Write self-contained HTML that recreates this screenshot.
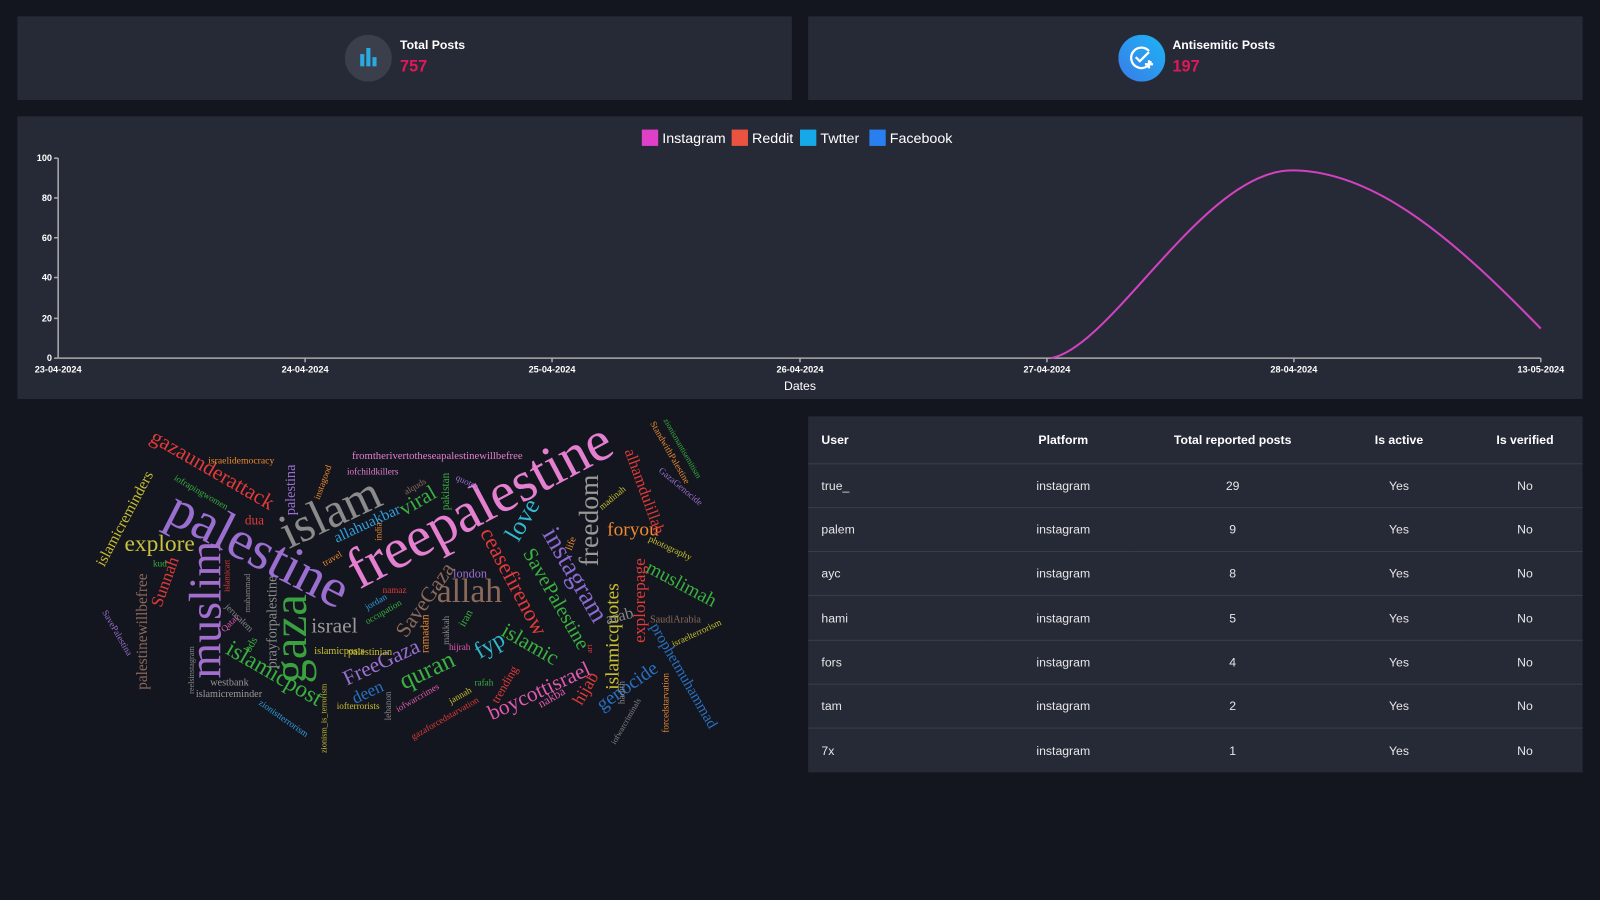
<!DOCTYPE html>
<html><head><meta charset="utf-8"><style>
*{margin:0;padding:0;box-sizing:border-box}
html,body{width:1600px;height:900px;overflow:hidden;background:#13161e;font-family:"Liberation Sans",sans-serif;color:#fff}
#w{position:absolute;left:0;top:0;width:1568px;height:882px;transform:scale(1.020408);transform-origin:0 0}
.card{position:absolute;background:#262a36}
.t{position:absolute;font-weight:bold;font-size:12px}
.n{position:absolute;font-weight:bold;font-size:16px;color:#e0185a}
table{border-collapse:collapse;width:100%;font-size:12px;table-layout:fixed}
th{height:46px;font-weight:bold;border-bottom:1px solid #3a3e4a}
td{height:43.3px;border-bottom:1px solid #3a3e4a;color:#e6e6e6}
th,td{text-align:center}
th:first-child,td:first-child{text-align:left;padding-left:13px}
tr:last-child td{border-bottom:none}
</style></head><body><div id="w">
<div class="card" style="left:17px;top:16px;width:759px;height:82px"></div>
<div class="card" style="left:792px;top:16px;width:759px;height:82px"></div>
<svg style="position:absolute;left:338px;top:34px" width="46" height="46"><circle cx="23" cy="23" r="23" fill="#3b3f4b"/><rect x="15" y="19" width="4" height="12" fill="#29abe2"/><rect x="21" y="13" width="4" height="18" fill="#29abe2"/><rect x="27" y="22" width="4" height="9" fill="#29abe2"/></svg>
<div class="t" style="left:392px;top:37px">Total Posts</div><div class="n" style="left:392px;top:57px">757</div>
<svg style="position:absolute;left:1096px;top:34px" width="46" height="46"><defs><linearGradient id="g" x1="0" y1="1" x2="1" y2="0"><stop offset="0" stop-color="#3a7be8"/><stop offset="1" stop-color="#1cb5f5"/></linearGradient></defs><circle cx="23" cy="23" r="23" fill="url(#g)"/><path d="M30 16 A10 10 0 1 0 32 26" fill="none" stroke="#fff" stroke-width="2.2"/><path d="M17 22 l4 4 l9 -9" fill="none" stroke="#fff" stroke-width="2.2"/><path d="M30 25 v8 M26 29 h8" stroke="#fff" stroke-width="2.2"/></svg>
<div class="t" style="left:1149px;top:37px">Antisemitic Posts</div><div class="n" style="left:1149px;top:57px">197</div>

<div class="card" style="left:17px;top:114px;width:1534px;height:277px"></div>
<svg style="position:absolute;left:0;top:0" width="1568" height="400" font-family="Liberation Sans" font-weight="bold" font-size="9" fill="#fff">
<g font-weight="normal" font-size="14"><rect x="629" y="127" width="16" height="16" fill="#e040c8"/><text x="649" y="140">Instagram</text>
<rect x="717" y="127" width="16" height="16" fill="#e9533f"/><text x="737" y="140">Reddit</text>
<rect x="784" y="127" width="16" height="16" fill="#16a8e8"/><text x="804" y="140">Twtter</text>
<rect x="852" y="127" width="16" height="16" fill="#2a7ff0"/><text x="872" y="140">Facebook</text></g>
<g stroke="#aaa" stroke-width="1.5"><line x1="57" y1="155" x2="57" y2="351"/><line x1="57" y1="351" x2="1510" y2="351"/>
<line x1="53" y1="155" x2="57" y2="155"/><line x1="53" y1="194" x2="57" y2="194"/><line x1="53" y1="233" x2="57" y2="233"/><line x1="53" y1="272" x2="57" y2="272"/><line x1="53" y1="312" x2="57" y2="312"/><line x1="53" y1="351" x2="57" y2="351"/>
<line x1="299" y1="351" x2="299" y2="355"/><line x1="541" y1="351" x2="541" y2="355"/><line x1="784" y1="351" x2="784" y2="355"/><line x1="1026" y1="351" x2="1026" y2="355"/><line x1="1268" y1="351" x2="1268" y2="355"/><line x1="1510" y1="351" x2="1510" y2="355"/></g>
<g text-anchor="end"><text x="51" y="158">100</text><text x="51" y="197">80</text><text x="51" y="236">60</text><text x="51" y="275">40</text><text x="51" y="315">20</text><text x="51" y="354">0</text></g>
<g text-anchor="middle"><text x="57" y="365">23-04-2024</text><text x="299" y="365">24-04-2024</text><text x="541" y="365">25-04-2024</text><text x="784" y="365">26-04-2024</text><text x="1026" y="365">27-04-2024</text><text x="1268" y="365">28-04-2024</text><text x="1510" y="365">13-05-2024</text>
<text x="784" y="382" font-weight="normal" font-size="12">Dates</text></g>
<path d="M1030 351 C1090 340 1180 167 1266 167 C1350 167 1430 240 1510 322" fill="none" stroke="#d042c0" stroke-width="2"/>
</svg>

<svg style="position:absolute;left:0;top:400px" width="780" height="360" font-family="Liberation Serif">
<g transform="translate(0,-400)">
<text transform="translate(352,578) rotate(-28)" font-size="56" fill="#e57fcf">freepalestine</text>
<text transform="translate(160,510) rotate(27)" font-size="54" fill="#9b6fd0">palestine</text>
<text transform="translate(283,538) rotate(-25)" font-size="48" fill="#8b8b8b">islam</text>
<text transform="translate(216,665) rotate(-90)" font-size="45" fill="#a36fcf">muslim</text>
<text transform="translate(300,670) rotate(-90)" font-size="48" fill="#3aa040">gaza</text>
<text x="428" y="590" font-size="33" fill="#8c6a5a">allah</text>
<text x="305" y="620" font-size="21" fill="#9a9a9a">israel</text>
<text x="122" y="540" font-size="23" fill="#c8c040">explore</text>
<text transform="translate(531,523) rotate(60)" font-size="26" fill="#8a6ad0">instagram</text>
<text transform="translate(470,522) rotate(62)" font-size="22" fill="#e03a3a">ceasefirenow</text>
<text transform="translate(512,542) rotate(60)" font-size="20" fill="#3ab040">SavePalestine</text>
<text transform="translate(586,555) rotate(-90)" font-size="27" fill="#999">freedom</text>
<text x="595" y="525" font-size="19" fill="#f08a30">foryou</text>
<text transform="translate(508,532) rotate(-60)" font-size="25" fill="#30b8d0">love</text>
<text transform="translate(606,676) rotate(-90)" font-size="19" fill="#c8c030">islamicquotes</text>
<text transform="translate(632,630) rotate(-90)" font-size="17" fill="#e03a3a">explorepage</text>
<text transform="translate(632,560) rotate(28)" font-size="19" fill="#3ab040">muslimah</text>
<text transform="translate(396,676) rotate(-25)" font-size="25" fill="#3ab040">quran</text>
<text transform="translate(340,672) rotate(-25)" font-size="21" fill="#9b6fd0">FreeGaza</text>
<text transform="translate(220,640) rotate(30)" font-size="23" fill="#3ab040">islamicpost</text>
<text transform="translate(482,706) rotate(-25)" font-size="21" fill="#e05ab0">boycottisrael</text>
<text transform="translate(590,697) rotate(-35)" font-size="19" fill="#2a70c0">genocide</text>
<text transform="translate(637,614) rotate(60)" font-size="15" fill="#2a70c0">prophetmuhammad</text>
<text transform="translate(146,432) rotate(30)" font-size="21" fill="#e03a3a">gazaunderattack</text>
<text transform="translate(102,556) rotate(-62)" font-size="15" fill="#c8c030">islamicreminders</text>
<text transform="translate(144,676) rotate(-90)" font-size="15" fill="#8c6a5a">palestinewillbefree</text>
<text transform="translate(158,596) rotate(-70)" font-size="17" fill="#e03a3a">Sunnah</text>
<text x="345" y="450" font-size="10.5" fill="#e57fcf">fromtherivertotheseapalestinewillbefree</text>
<text x="204" y="454" font-size="9.5" fill="#f08a30">israelidemocracy</text>
<text x="340" y="465" font-size="9" fill="#e57fcf">iofchildkillers</text>
<text transform="translate(612,442) rotate(70)" font-size="16" fill="#e03a3a">alhamdulillah</text>
<text transform="translate(398,626) rotate(-55)" font-size="21" fill="#8c6a5a">SaveGaza</text>
<text transform="translate(470,646) rotate(-30)" font-size="23" fill="#30b8d0">fyp</text>
<text transform="translate(490,622) rotate(30)" font-size="21" fill="#3ab040">islamic</text>
<text transform="translate(570,692) rotate(-60)" font-size="17" fill="#e03a3a">hijab</text>
<text transform="translate(396,506) rotate(-30)" font-size="21" fill="#3ab040">viral</text>
<text transform="translate(330,532) rotate(-25)" font-size="15" fill="#30a0e0">allahuakbar</text>
<text transform="translate(289,505) rotate(-90)" font-size="14" fill="#9b6fd0">palestina</text>
<text transform="translate(271,655) rotate(-90)" font-size="14" fill="#8a8a8a">prayforpalestine</text>
<text transform="translate(348,690) rotate(-25)" font-size="17" fill="#2a70c0">deen</text>
<text x="444" y="566" font-size="12" fill="#9b6fd0">london</text>
<text x="240" y="514" font-size="13" fill="#e03a3a">dua</text>
<text x="341" y="642" font-size="10" fill="#c8c030">palestinian</text>
<text x="308" y="641" font-size="10" fill="#c8c030">islamicposts</text>
<text x="192" y="683" font-size="10" fill="#999">islamicreminder</text>
<text x="206" y="672" font-size="10" fill="#999">westbank</text>
<text transform="translate(637,610)" font-size="10" fill="#8c6a5a">SaudiArabia</text>
<text transform="translate(595,612) rotate(-15)" font-size="16" fill="#888">arab</text>
<text transform="translate(635,530) rotate(25)" font-size="9" fill="#c8c030">photography</text>
<text transform="translate(660,634) rotate(-25)" font-size="9" fill="#c8c030">israelterrorism</text>
<text transform="translate(590,500) rotate(-40)" font-size="9" fill="#c8c030">madinah</text>
<text transform="translate(645,462) rotate(40)" font-size="9" fill="#9b6fd0">GazaGenocide</text>
<text transform="translate(637,415) rotate(60)" font-size="9" fill="#f08a30">StandwithPalestine</text>
<text transform="translate(650,412) rotate(60)" font-size="8" fill="#3ab040">zionismantisemitism</text>
<text transform="translate(100,600) rotate(60)" font-size="9" fill="#9b6fd0">SavePalestina</text>
<text transform="translate(170,470) rotate(30)" font-size="9" fill="#3ab040">iofrapingwomen</text>
<text transform="translate(313,490) rotate(-70)" font-size="9" fill="#f08a30">instagood</text>
<text transform="translate(253,690) rotate(35)" font-size="9" fill="#30a0e0">zionistterrorism</text>
<text x="330" y="695" font-size="9" fill="#c8c030">iofterrorists</text>
<text transform="translate(390,698) rotate(-30)" font-size="9" fill="#e05ab0">iofwarcrimes</text>
<text transform="translate(405,725) rotate(-30)" font-size="9" fill="#e03a3a">gazaforcedstarvation</text>
<text transform="translate(655,718) rotate(-90)" font-size="9" fill="#f08a30">forcedstarvation</text>
<text transform="translate(603,730) rotate(-60)" font-size="8" fill="#888">iofwarcriminals</text>
<text transform="translate(320,738) rotate(-90)" font-size="8" fill="#c8c030">zionism_is_terrorism</text>
<text transform="translate(383,706) rotate(-90)" font-size="9" fill="#888">lebanon</text>
<text transform="translate(488,690) rotate(-60)" font-size="12" fill="#e03a3a">trending</text>
<text transform="translate(530,694) rotate(-30)" font-size="12" fill="#e05ab0">nakba</text>
<text x="465" y="672" font-size="9" fill="#3ab040">rafah</text>
<text transform="translate(442,690) rotate(-30)" font-size="9" fill="#c8c030">jannah</text>
<text x="375" y="581" font-size="9" fill="#e03a3a">namaz</text>
<text transform="translate(360,612) rotate(-30)" font-size="9" fill="#3ab040">occupation</text>
<text transform="translate(360,598) rotate(-30)" font-size="9" fill="#30a0e0">jordan</text>
<text transform="translate(420,640) rotate(-90)" font-size="11" fill="#f08a30">ramadan</text>
<text transform="translate(440,632) rotate(-90)" font-size="9" fill="#888">makkah</text>
<text x="440" y="637" font-size="9" fill="#e05ab0">hijrah</text>
<text transform="translate(455,615) rotate(-60)" font-size="11" fill="#3ab040">iran</text>
<text transform="translate(440,500) rotate(-90)" font-size="11" fill="#3ab040">pakistan</text>
<text transform="translate(398,485) rotate(-30)" font-size="9" fill="#8c6a5a">alquds</text>
<text transform="translate(446,470) rotate(25)" font-size="9" fill="#9b6fd0">quotes</text>
<text transform="translate(374,530) rotate(-90)" font-size="9" fill="#f08a30">india</text>
<text transform="translate(318,555) rotate(-30)" font-size="9" fill="#f08a30">travel</text>
<text transform="translate(225,580) rotate(-90)" font-size="8" fill="#e03a3a">islamicart</text>
<text transform="translate(245,600) rotate(-90)" font-size="8" fill="#888">muhammad</text>
<text transform="translate(220,595) rotate(45)" font-size="9" fill="#888">jerusalem</text>
<text transform="translate(220,620) rotate(-45)" font-size="9" fill="#e05ab0">Qatar</text>
<text transform="translate(245,640) rotate(-60)" font-size="11" fill="#3ab040">bds</text>
<text x="150" y="555" font-size="9" fill="#3ab040">kud</text>
<text transform="translate(190,680) rotate(-90)" font-size="8" fill="#888">reelsinstagram</text>
<text transform="translate(560,540) rotate(-70)" font-size="10" fill="#f08a30">life</text>
<text transform="translate(580,640) rotate(-90)" font-size="8" fill="#e03a3a">art</text>
<text transform="translate(612,690) rotate(-90)" font-size="9" fill="#888">hadith</text>
</g></svg>

<div class="card" style="left:792px;top:408px;width:759px;height:349px">
<table><tr><th style="width:180px">User</th><th style="width:140px">Platform</th><th style="width:192px">Total reported posts</th><th style="width:134px">Is active</th><th>Is verified</th></tr>
<tr><td>true_</td><td>instagram</td><td>29</td><td>Yes</td><td>No</td></tr>
<tr><td>palem</td><td>instagram</td><td>9</td><td>Yes</td><td>No</td></tr>
<tr><td>ayc</td><td>instagram</td><td>8</td><td>Yes</td><td>No</td></tr>
<tr><td>hami</td><td>instagram</td><td>5</td><td>Yes</td><td>No</td></tr>
<tr><td>fors</td><td>instagram</td><td>4</td><td>Yes</td><td>No</td></tr>
<tr><td>tam</td><td>instagram</td><td>2</td><td>Yes</td><td>No</td></tr>
<tr><td>7x</td><td>instagram</td><td>1</td><td>Yes</td><td>No</td></tr></table>
</div>
</div></body></html>
